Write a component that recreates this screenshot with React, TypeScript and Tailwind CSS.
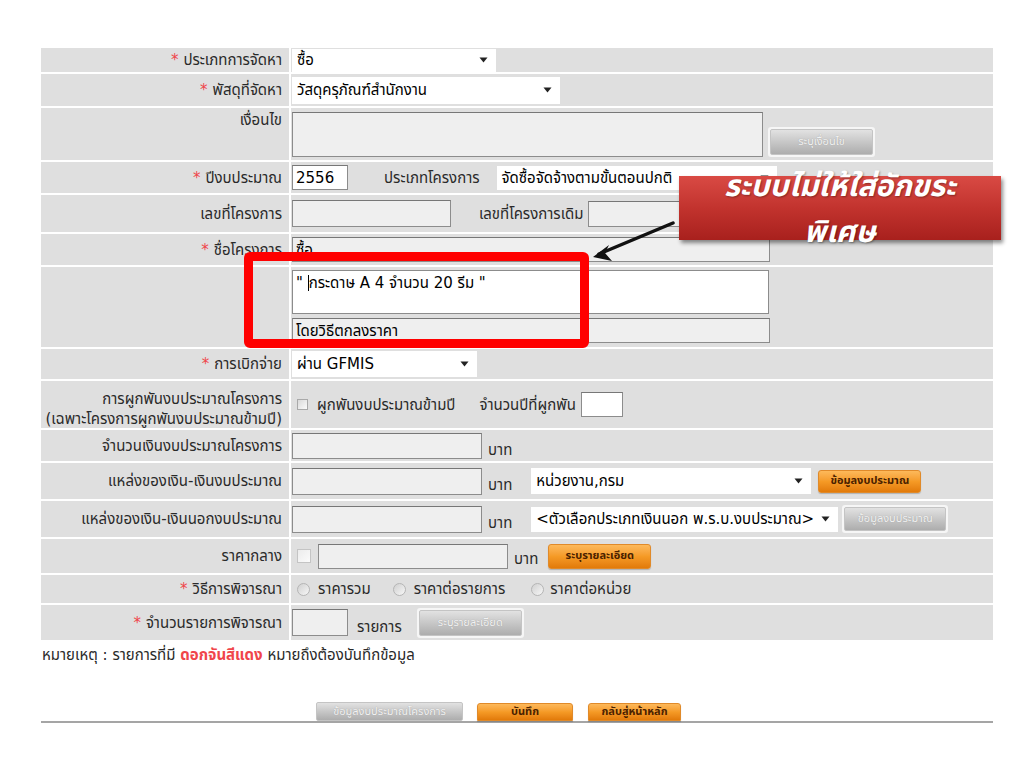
import React from "react";

const Star = () => <span className="text-[#f0454a] mr-[5px]">*</span>;

const Label = ({ children, className = "" }: { children?: React.ReactNode; className?: string }) => (
  <div className={"w-[248px] shrink-0 bg-[#dfdfdf] flex justify-end pr-[7px] text-[#2a2a2a] " + className}>
    {children}
  </div>
);

const Cell = ({ children, className = "" }: { children?: React.ReactNode; className?: string }) => (
  <div className={"flex-1 bg-[#dfdfdf] flex pl-[1px] " + className}>{children}</div>
);

const Caret = () => (
  <svg width="9" height="6" viewBox="0 0 9 6" className="shrink-0">
    <path d="M0.5 0.5h8L4.5 5.5z" fill="#222" />
  </svg>
);

const Select = ({ text, className = "" }: { text: string; className?: string }) => (
  <div className={"bg-white flex items-center justify-between pl-[5px] pr-[8px] text-black " + className}>
    <span className="whitespace-nowrap leading-[22px]">{text}</span>
    <Caret />
  </div>
);

const Box = ({ className = "", children }: { className?: string; children?: React.ReactNode }) => (
  <div className={"border border-[#8c8c8c] border-t-[#777] flex items-center px-[3px] text-black whitespace-nowrap " + className}>
    {children ? <span className="whitespace-pre">{children}</span> : null}
  </div>
);

const OrangeBtn = ({ text, className = "" }: { text: string; className?: string }) => (
  <div
    className={
      "flex items-center justify-center rounded-[3px] border border-[#e08a2a] bg-linear-to-b from-[#fdb95a] via-[#f59a25] to-[#e27a08] text-[11px] font-bold text-[#4a2100] shadow-[0_1px_1px_rgba(0,0,0,0.2)] " +
      className
    }
  >
    {text}
  </div>
);

const GrayBtn = ({ text, className = "" }: { text: string; className?: string }) => (
  <div className={"p-[2px] bg-white/70 rounded-[3px] " + className}>
    <div className="w-full h-full flex items-center justify-center rounded-[2px] border border-[#c4c4c4] bg-linear-to-b from-[#e2e2e2] to-[#adadad] text-[11px] text-[#f2f2f2] [text-shadow:0_0_1px_#999]">
      {text}
    </div>
  </div>
);

const Check = ({ className = "" }: { className?: string }) => (
  <div className={"border border-[#a9a9a9] bg-linear-to-br from-[#d9d9d9] to-[#fbfbfb] " + className} />
);

const Radio = () => (
  <div className="w-[13px] h-[13px] rounded-full border border-[#b5b5b5] bg-linear-to-br from-[#d0d0d0] to-[#f7f7f7]" />
);

export default function App() {
  return (
    <div className="relative w-[1024px] h-[768px] bg-white overflow-hidden font-['DejaVu_Sans','Noto_Sans_Thai',sans-serif] text-[15px] leading-[18px]">
      <div className="pt-[48px] pl-[41px]">
        <div className="w-[952px] flex flex-col gap-[2px] bg-white">
          {/* 1 */}
          <div className="flex gap-[2px] h-[24px]">
            <Label className="items-center"><Star />ประเภทการจัดหา</Label>
            <Cell className="items-center">
              <Select text="ซื้อ" className="w-[204px] h-[23px]" />
            </Cell>
          </div>
          {/* 2 */}
          <div className="flex gap-[2px] h-[32px]">
            <Label className="items-center"><Star />พัสดุที่จัดหา</Label>
            <Cell className="items-center">
              <Select text="วัสดุครุภัณฑ์สำนักงาน" className="w-[268px] h-[27px]" />
            </Cell>
          </div>
          {/* 3 */}
          <div className="flex gap-[2px] h-[52px]">
            <Label className="items-start pt-[3px]">เงื่อนไข</Label>
            <Cell className="items-end pb-[3px] gap-[5px]">
              <Box className="w-[471px] h-[45px] bg-[#efefef]" />
              <GrayBtn text="ระบุเงื่อนไข" className="w-[107px] h-[30px]" />
            </Cell>
          </div>
          {/* 4 */}
          <div className="flex gap-[2px] h-[31px]">
            <Label className="items-center"><Star />ปีงบประมาณ</Label>
            <Cell className="items-center">
              <Box className="w-[56px] h-[25px] bg-white">2556</Box>
              <span className="ml-[36px] mr-[17px] text-[#2a2a2a]">ประเภทโครงการ</span>
              <Select text="จัดซื้อจัดจ้างตามขั้นตอนปกติ" className="w-[280px] h-[24px]" />
            </Cell>
          </div>
          {/* 5 */}
          <div className="flex gap-[2px] h-[37px]">
            <Label className="items-center">เลขที่โครงการ</Label>
            <Cell className="items-center">
              <Box className="w-[159px] h-[27px] bg-[#efefef]" />
              <span className="ml-[28px] mr-[5px] text-[#2a2a2a]">เลขที่โครงการเดิม</span>
              <Box className="w-[180px] h-[26px] bg-[#efefef]" />
            </Cell>
          </div>
          {/* 6 */}
          <div className="flex gap-[2px] h-[31px]">
            <Label className="items-center"><Star />ชื่อโครงการ</Label>
            <Cell className="items-center">
              <Box className="w-[478px] h-[25px] bg-[#efefef]">ซื้อ</Box>
            </Cell>
          </div>
          {/* 7 */}
          <div className="flex gap-[2px] h-[80px]">
            <Label />
            <Cell className="flex-col pt-[3px] gap-[4px]">
              <div className="w-[477px] h-[44px] bg-white border border-[#8c8c8c] px-[3px] pt-[3px] text-black whitespace-pre">
                {'" '}<span className="inline-block w-px h-[16px] -mb-[3px] bg-black" />{'กระดาษ A 4 จำนวน 20 รีม "'}
              </div>
              <Box className="w-[478px] h-[25px] bg-[#efefef]">โดยวิธีตกลงราคา</Box>
            </Cell>
          </div>
          {/* 8 */}
          <div className="flex gap-[2px] h-[30px]">
            <Label className="items-center"><Star />การเบิกจ่าย</Label>
            <Cell className="items-center">
              <Select text="ผ่าน GFMIS" className="w-[185px] h-[26px]" />
            </Cell>
          </div>
          {/* 9 */}
          <div className="flex gap-[2px] h-[47px]">
            <Label className="flex-col items-end justify-center text-right">
              <span>การผูกพันงบประมาณโครงการ</span>
              <span className="mt-[2px]">(เฉพาะโครงการผูกพันงบประมาณข้ามปี)</span>
            </Label>
            <Cell className="items-center">
              <Check className="w-[11px] h-[11px] ml-[5px] mr-[9px]" />
              <span className="text-[#2a2a2a]">ผูกพันงบประมาณข้ามปี</span>
              <span className="ml-[24px] mr-[5px] text-[#2a2a2a]">จำนวนปีที่ผูกพัน</span>
              <Box className="w-[42px] h-[25px] bg-white" />
            </Cell>
          </div>
          {/* 10 */}
          <div className="flex gap-[2px] h-[31px]">
            <Label className="items-center">จำนวนเงินงบประมาณโครงการ</Label>
            <Cell className="items-center">
              <Box className="w-[190px] h-[26px] bg-[#efefef]" />
              <span className="ml-[6px] mt-[8px] text-[#2a2a2a]">บาท</span>
            </Cell>
          </div>
          {/* 11 */}
          <div className="flex gap-[2px] h-[36px]">
            <Label className="items-center">แหล่งของเงิน-เงินงบประมาณ</Label>
            <Cell className="items-center">
              <Box className="w-[190px] h-[27px] bg-[#efefef]" />
              <span className="ml-[6px] mt-[8px] text-[#2a2a2a]">บาท</span>
              <Select text="หน่วยงาน,กรม" className="ml-[19px] w-[280px] h-[26px]" />
              <OrangeBtn text="ข้อมูลงบประมาณ" className="ml-[7px] w-[103px] h-[23px]" />
            </Cell>
          </div>
          {/* 12 */}
          <div className="flex gap-[2px] h-[36px]">
            <Label className="items-center">แหล่งของเงิน-เงินนอกงบประมาณ</Label>
            <Cell className="items-center">
              <Box className="w-[190px] h-[27px] bg-[#efefef]" />
              <span className="ml-[6px] mt-[8px] text-[#2a2a2a]">บาท</span>
              <Select text="<ตัวเลือกประเภทเงินนอก พ.ร.บ.งบประมาณ>" className="ml-[19px] w-[307px] h-[25px]" />
              <GrayBtn text="ข้อมูลงบประมาณ" className="ml-[4px] w-[106px] h-[28px]" />
            </Cell>
          </div>
          {/* 13 */}
          <div className="flex gap-[2px] h-[34px]">
            <Label className="items-center">ราคากลาง</Label>
            <Cell className="items-center">
              <Check className="w-[14px] h-[14px] ml-[5px] mr-[7px] border-[#c4c4c4] from-[#ececec] to-[#f8f8f8]" />
              <Box className="w-[190px] h-[25px] bg-[#efefef]" />
              <span className="ml-[6px] mt-[6px] text-[#2a2a2a]">บาท</span>
              <OrangeBtn text="ระบุรายละเอียด" className="ml-[10px] w-[103px] h-[25px]" />
            </Cell>
          </div>
          {/* 14 */}
          <div className="flex gap-[2px] h-[28px]">
            <Label className="items-center"><Star />วิธีการพิจารณา</Label>
            <Cell className="items-center text-[#2a2a2a]">
              <div className="ml-[5px] mr-[8px]"><Radio /></div>
              <span>ราคารวม</span>
              <div className="ml-[22px] mr-[8px]"><Radio /></div>
              <span>ราคาต่อรายการ</span>
              <div className="ml-[26px] mr-[6px]"><Radio /></div>
              <span>ราคาต่อหน่วย</span>
            </Cell>
          </div>
          {/* 15 */}
          <div className="flex gap-[2px] h-[35px]">
            <Label className="items-center"><Star />จำนวนรายการพิจารณา</Label>
            <Cell className="items-center">
              <Box className="w-[56px] h-[27px] bg-[#efefef]" />
              <span className="ml-[9px] mt-[8px] text-[#2a2a2a]">รายการ</span>
              <GrayBtn text="ระบุรายละเอียด" className="ml-[15px] w-[107px] h-[30px]" />
            </Cell>
          </div>
        </div>

        <div className="mt-[6px] pl-[1px] text-[#2a2a2a]">
          หมายเหตุ : รายการที่มี <span className="text-[#f0454a] font-bold">ดอกจันสีแดง</span> หมายถึงต้องบันทึกข้อมูล
        </div>

        <div className="mt-[38px] w-[952px] flex items-end border-b-[2px] border-[#a5a5a5]">
          <GrayBtn text="ข้อมูลงบประมาณโครงการ" className="ml-[275px] w-[147px] h-[19px] !p-0" />
          <OrangeBtn text="บันทึก" className="ml-[14px] w-[96px] h-[18px] rounded-b-none" />
          <OrangeBtn text="กลับสู่หน้าหลัก" className="ml-[15px] w-[93px] h-[18px] rounded-b-none" />
        </div>
      </div>

      {/* highlight frame */}
      <div className="absolute left-[244px] top-[252px] w-[345px] h-[96px] border-[9px] border-[#ff0000] rounded-[6px]" />

      {/* arrow */}
      <svg className="absolute left-[585px] top-[215px]" width="100" height="50" viewBox="0 0 100 50">
        <line x1="88" y1="8" x2="14" y2="39" stroke="#111" strokeWidth="3.5" strokeLinecap="round" />
        <path d="M8 42 L24 30 L20 38 L27 46 Z" fill="#111" />
      </svg>

      {/* callout */}
      <div className="absolute left-[679px] top-[176px] w-[322px] h-[64px] bg-linear-to-b from-[#d94a44] via-[#c2332e] to-[#a8201d] shadow-[2px_3px_4px_rgba(0,0,0,0.45)]">
        <div className="-mt-[13px] flex flex-col items-center text-white italic font-bold text-[30px] leading-[46px] [text-shadow:1px_1px_2px_rgba(0,0,0,0.35)]">
          <span>ระบบไม่ให้ใส่อักขระ</span>
          <span>พิเศษ</span>
        </div>
      </div>
    </div>
  );
}
